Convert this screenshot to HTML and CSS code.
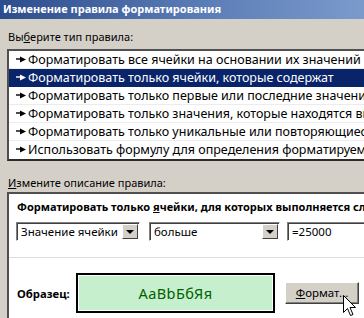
FILE: index.html
```html
<!DOCTYPE html>
<html lang="ru">
<head>
  <meta charset="UTF-8" />
  <title>Изменение правила форматирования</title>
  <link rel="stylesheet" href="styles.css">
</head>
<body>
  <div class="dialog">
    <div class="titlebar">Изменение правила форматирования</div>
    <div class="content">
      <div class="caption">Вы<u>б</u>ерите тип правила:</div>
      <div class="rules">
        <div class="rule"><svg class="arr" width="10" height="7" viewBox="0 0 10 7"><path d="M0 3h4" stroke="currentColor" stroke-width="1.4"/><path d="M4 0.5L10 3.5L4 6.5Z" fill="currentColor"/></svg>Форматировать все ячейки на основании их значений</div>
        <div class="rule selected"><svg class="arr" width="10" height="7" viewBox="0 0 10 7"><path d="M0 3h4" stroke="currentColor" stroke-width="1.4"/><path d="M4 0.5L10 3.5L4 6.5Z" fill="currentColor"/></svg>Форматировать только ячейки, которые содержат</div>
        <div class="rule"><svg class="arr" width="10" height="7" viewBox="0 0 10 7"><path d="M0 3h4" stroke="currentColor" stroke-width="1.4"/><path d="M4 0.5L10 3.5L4 6.5Z" fill="currentColor"/></svg>Форматировать только первые или последние значения</div>
        <div class="rule"><svg class="arr" width="10" height="7" viewBox="0 0 10 7"><path d="M0 3h4" stroke="currentColor" stroke-width="1.4"/><path d="M4 0.5L10 3.5L4 6.5Z" fill="currentColor"/></svg>Форматировать только значения, которые находятся выше или ниже среднего</div>
        <div class="rule"><svg class="arr" width="10" height="7" viewBox="0 0 10 7"><path d="M0 3h4" stroke="currentColor" stroke-width="1.4"/><path d="M4 0.5L10 3.5L4 6.5Z" fill="currentColor"/></svg>Форматировать только уникальные или повторяющиеся значения</div>
        <div class="rule"><svg class="arr" width="10" height="7" viewBox="0 0 10 7"><path d="M0 3h4" stroke="currentColor" stroke-width="1.4"/><path d="M4 0.5L10 3.5L4 6.5Z" fill="currentColor"/></svg>Использовать формулу для определения форматируемых ячеек</div>
      </div>

      <div class="caption second"><u>И</u>змените описание правила:</div>
      <div class="panel">
        <div class="panel-head">Форматировать только <u>я</u>чейки, для которых выполняется следующее условие:</div>
        <div class="conditions">
          <div class="combo w1"><span class="combo-text">Значение ячейки</span><span class="combo-btn"><i></i></span></div>
          <div class="combo w2"><span class="combo-text">больше</span><span class="combo-btn"><i></i></span></div>
          <div class="textbox">=25000</div>
        </div>
        <div class="separator"></div>
        <div class="sample-row">
          <div class="sample-label">Образец:</div>
          <div class="sample"><span>AaBbБбЯя</span></div>
          <div class="button"><u>Ф</u>ормат...</div>
        </div>
      </div>
    </div>
  </div>

  <svg class="cursor" width="13" height="21" viewBox="0 0 13 21">
    <path d="M0.5 0.5V17.5L4.5 13.5L7.5 20.5L10 19.5L7 12.5H12.5Z" fill="#fff" stroke="#000" stroke-width="1" stroke-linejoin="miter"/>
  </svg>
</body>
</html>
```

FILE: styles.css
```css
html, body {
  margin:0;
  padding:0;
}
body {
  width:364px;
  height:318px;
  overflow:hidden;
  background:#d4d0c8;
  font-family:"Noto Sans", "Liberation Sans", sans-serif;
  font-size:11px;
  color:#000;
  position:relative;
}
.dialog {
  width:440px;
}
.titlebar {
  height:19px;
  line-height:18px;
  padding-left:3px;
  color:#fff;
  font-weight:bold;
  font-size:11px;
  background:linear-gradient(to right, #2c4c8c 0%, #5a7cb6 45%, #8aa8d6 100%);
  white-space:nowrap;
}
.content {
  padding-left:7px;
}
.caption {
  height:16px;
  line-height:16px;
  margin-top:10px;
  padding-left:1px;
  margin-bottom:4px;
  font-size:11px;
}
.caption.second {
  margin-top:14px;
  margin-bottom:1px;
}
.rules {
  background:#fff;
  border:2px solid #2b2b2b;
  border-color:#505050 #2b2b2b #2b2b2b #505050;
  font-size:12.5px;
}
.rule {
  height:17px;
  line-height:17px;
  border-bottom:1px solid #ececec;
  padding-left:7px;
  white-space:nowrap;
  display:flex;
  align-items:center;
  color:#000;
}
.rule:last-child {
  border-bottom-color:#fff;
}
.rule.selected {
  background:#0a246a;
  color:#fff;
  border-bottom-color:#0a246a;
}
.arr {
  margin-right:2px;
  flex:none;
}
.panel {
  background:#fff;
  border:2px solid #2b2b2b;
  border-color:#505050 #2b2b2b #2b2b2b #505050;
  height:140px;
}
.panel-head {
  font-weight:bold;
  font-size:11px;
  padding:5px 0 0 8px;
  height:16px;
  line-height:16px;
  white-space:nowrap;
}
.conditions {
  display:flex;
  gap:9px;
  padding:7px 0 0 7px;
  font-size:11.5px;
}
.combo {
  display:flex;
  border:1px solid;
  border-color:#808080 #fff #fff #808080;
  box-shadow:inset 1px 1px 0 #404040;
  box-sizing:border-box;
  padding:1px;
  height:19px;
}
.combo.w1 { width:124px; }
.combo.w2 { width:131px; }
.combo-text {
  flex:1;
  line-height:15px;
  padding-left:3px;
  white-space:nowrap;
}
.combo-btn {
  width:16px;
  background:#d4d0c8;
  border:1px solid;
  border-color:#fff #404040 #404040 #fff;
  box-sizing:border-box;
  display:flex;
  align-items:center;
  justify-content:center;
}
.combo-btn i {
  width:0;
  height:0;
  border-left:4px solid transparent;
  border-right:4px solid transparent;
  border-top:4px solid #000;
}
.textbox {
  margin-left:-2px;
  height:19px;
  width:100px;
  box-sizing:border-box;
  border:1px solid;
  border-color:#808080 #fff #fff #808080;
  box-shadow:inset 1px 1px 0 #404040;
  line-height:17px;
  padding-left:4px;
}
.separator {
  height:1px;
  background:#dcdcdc;
  margin-top:16px;
}
.sample-row {
  display:flex;
  align-items:center;
  padding:15px 0 0 8px;
}
.sample-label {
  width:59px;
  font-weight:bold;
  font-size:11.3px;
}
.sample {
  width:199px;
  height:40px;
  box-sizing:border-box;
  border:2px solid #000;
  padding:1px;
  background:#c6efce;
  background-clip:content-box;
  display:flex;
  align-items:center;
  justify-content:center;
  color:#006100;
  font-size:14.5px;
  letter-spacing:0.4px;
}
.button {
  margin-left:10px;
  width:74px;
  height:22px;
  box-sizing:border-box;
  background:#d4d0c8;
  border:1px solid;
  border-color:#fff #404040 #404040 #fff;
  box-shadow:inset -1px -1px 0 #808080;
  text-align:center;
  line-height:19px;
  font-size:11.5px;
}
.cursor {
  position:absolute;
  left:343px;
  top:295px;
}
```
